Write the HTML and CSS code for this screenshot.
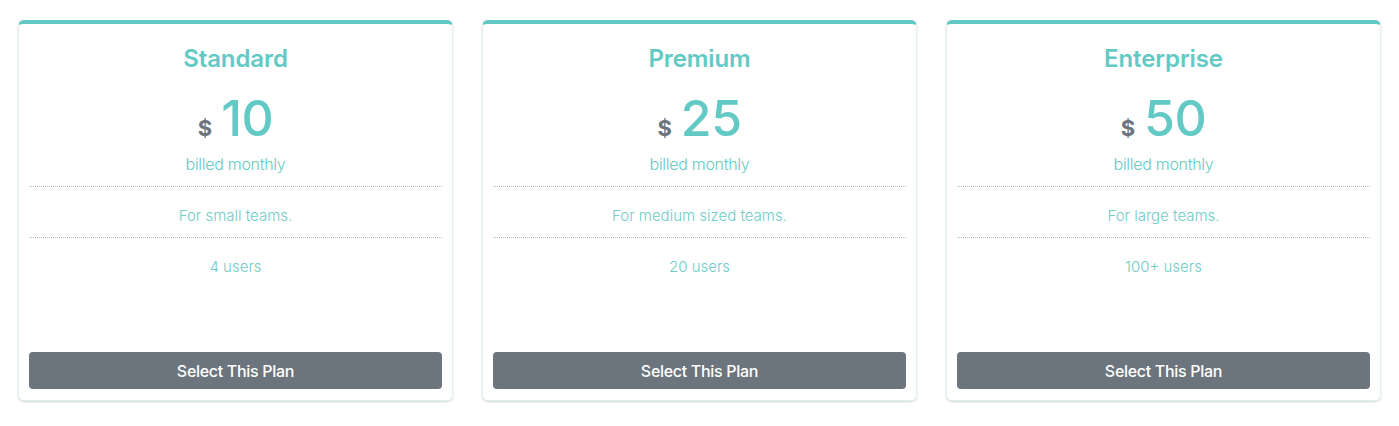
FILE: index.html
```html
<!DOCTYPE html>
<html lang="en">
<head>
<meta charset="utf-8">
<title>Pricing</title>
<link rel="stylesheet" href="styles.css">
</head>
<body>
<div class="plans">
  <div class="card">
    <div class="head">
      <h2 class="title">Standard</h2>
      <div class="price"><span class="cur">$</span><span class="amt">10</span></div>
      <div class="billed">billed monthly</div>
    </div>
    <ul class="features">
      <li>For small teams.</li>
      <li>4 users</li>
    </ul>
    <button class="btn">Select This Plan</button>
  </div>
  <div class="card">
    <div class="head">
      <h2 class="title">Premium</h2>
      <div class="price"><span class="cur">$</span><span class="amt">25</span></div>
      <div class="billed">billed monthly</div>
    </div>
    <ul class="features">
      <li>For medium sized teams.</li>
      <li>20 users</li>
    </ul>
    <button class="btn">Select This Plan</button>
  </div>
  <div class="card">
    <div class="head">
      <h2 class="title">Enterprise</h2>
      <div class="price"><span class="cur">$</span><span class="amt">50</span></div>
      <div class="billed">billed monthly</div>
    </div>
    <ul class="features">
      <li>For large teams.</li>
      <li>100+ users</li>
    </ul>
    <button class="btn">Select This Plan</button>
  </div>
</div>
</body>
</html>
```
FILE: styles.css
```css
* { box-sizing: border-box; }
html, body { margin: 0; padding: 0; background: #fff; }
body { font-family: Inter, "Noto Sans", sans-serif; }
.plans {
  display: grid;
  grid-template-columns: repeat(3, 435px);
  column-gap: 29px;
  padding: 20px 18px;
}
.card {
  height: 381px;
  display: flex;
  flex-direction: column;
  border: 1px solid #dff2f1;
  border-top: 4px solid #62c9c5;
  border-radius: 6px;
  padding: 0 10px 11px;
  box-shadow: 0 1px 2px rgba(0,0,0,0.18);
  text-align: center;
}
.head { padding-top: 20px; }
.title {
  margin: 0;
  font-size: 24px;
  line-height: 30px;
  font-weight: 600;
  color: #62c9c5;
  letter-spacing: -0.1px;
}
.price {
  height: 60px;
  margin-top: 14px;
  display: flex;
  justify-content: center;
  align-items: baseline;
  gap: 9px;
  line-height: 60px;
}
.cur {
  font-size: 22px;
  font-weight: 700;
  color: #6c757d;
}
.amt {
  font-size: 50px;
  font-weight: 500;
  color: #62c9c5;
  letter-spacing: -0.5px;
}
.billed {
  margin-top: 4px;
  font-size: 16px;
  line-height: 24px;
  font-weight: 300;
  letter-spacing: -0.3px;
  color: #66c9c5;
  padding-bottom: 10px;
}
.features {
  list-style: none;
  margin: 0;
  padding: 0;
  border-top: 1px dotted #b8b8b8;
}
.features li {
  padding: 17px 0 9px;
  font-size: 15px;
  line-height: 24px;
  font-weight: 300;
  color: #70cbc7;
}
.features li + li { border-top: 1px dotted #b8b8b8; }
.btn {
  margin-top: auto;
  height: 37px;
  width: 100%;
  border: none;
  border-radius: 4px;
  background: #6c757d;
  color: #fff;
  font-family: inherit;
  font-size: 16px;
  font-weight: 500;
  letter-spacing: -0.3px;
}
```
